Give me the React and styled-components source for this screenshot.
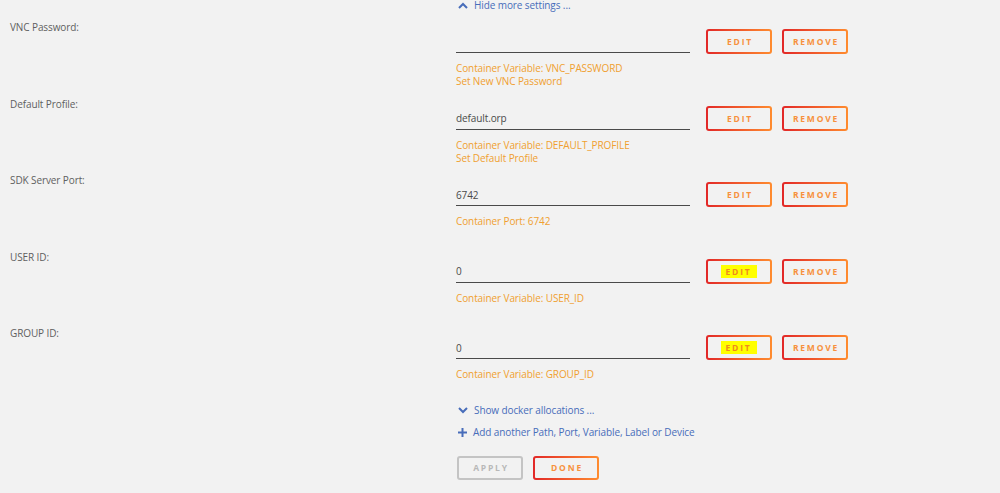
import React from "react";
import styled, { createGlobalStyle } from "styled-components";

const GlobalStyle = createGlobalStyle`
  html, body {
    margin: 0;
    padding: 0;
    background: #f2f2f2;
  }
  body {
    font-family: "Open Sans", "Liberation Sans", sans-serif;
    font-size: 10px;
    letter-spacing: -0.1px;
    color: #606060;
  }
`;

export const Page = styled.div`
  width: 1000px;
  height: 493px;
  overflow: hidden;
  background: #f2f2f2;
`;

// 블루 링크 (Hide more settings, Show docker allocations ...)
export const LinkRow = styled.div`
  display: flex;
  align-items: center;
  gap: 6px;
  margin-left: 458px;
  height: ${(p) => p.$h || 22}px;
  color: #486dba;
  line-height: 13px;
  svg {
    flex: none;
  }
`;

export const TopLink = styled(LinkRow)`
  height: 11px;
  margin-bottom: 8px;
`;

export const Settings = styled.div`
  display: flex;
  flex-direction: column;
`;

export const Row = styled.div`
  display: grid;
  grid-template-columns: 456px 392px;
  height: 76.5px;
`;

export const Label = styled.div`
  padding: 2px 0 0 10px;
  line-height: 13px;
  color: #5f5f5f;
`;

export const Field = styled.div`
  display: flex;
  flex-direction: column;
  padding-top: 10px;
`;

export const InputLine = styled.div`
  display: flex;
  align-items: center;
  gap: 16px;
`;

export const Input = styled.div`
  width: 234px;
  height: 23px;
  border-bottom: 1px solid #4a4a4a;
  box-sizing: border-box;
  display: flex;
  align-items: center;
  color: #4a4a4a;
  padding-top: 1px;
`;

export const Buttons = styled.div`
  display: flex;
  gap: 10px;
`;

// 빨강-주황 그라데이션 테두리 버튼
export const Button = styled.div`
  width: 66px;
  height: ${(p) => p.$h || 25}px;
  box-sizing: border-box;
  border: 2px solid transparent;
  border-radius: 3px;
  background: ${(p) =>
    p.$disabled
      ? "linear-gradient(#f2f2f2, #f2f2f2) padding-box, linear-gradient(#c4c4c4, #c4c4c4) border-box"
      : "linear-gradient(#f2f2f2, #f2f2f2) padding-box, linear-gradient(90deg, #e22828, #ff8c2f) border-box"};
  color: ${(p) => (p.$disabled ? "#b8b8b8" : "#f7913d")};
  display: flex;
  align-items: center;
  justify-content: center;
  font-size: 8.5px;
  font-weight: 700;
  letter-spacing: 1.8px;
  text-transform: uppercase;
  padding-left: 2px;
`;

export const Mark = styled.span`
  background: #ffff00;
  color: #f08a1e;
  padding: 2px 5px 1px 5px;
  margin-left: -3px;
  line-height: 10px;
`;

export const Help = styled.div`
  margin-top: 8px;
  color: #f0a030;
  line-height: 13px;
`;

export const Footer = styled.div`
  display: flex;
  gap: 10px;
  margin: 10px 0 0 457px;
`;

const ChevronUp = () => (
  <svg width="10" height="7" viewBox="0 0 10 7">
    <path d="M1 6 L5 2 L9 6" fill="none" stroke="#486dba" strokeWidth="2" />
  </svg>
);

const ChevronDown = () => (
  <svg width="10" height="7" viewBox="0 0 10 7">
    <path d="M1 1 L5 5 L9 1" fill="none" stroke="#486dba" strokeWidth="2" />
  </svg>
);

const Plus = () => (
  <svg width="9" height="9" viewBox="0 0 9 9">
    <path d="M4.5 0 V9 M0 4.5 H9" fill="none" stroke="#486dba" strokeWidth="2" />
  </svg>
);

const rows = [
  { label: "VNC Password:", value: "", help: ["Container Variable: VNC_PASSWORD", "Set New VNC Password"] },
  { label: "Default Profile:", value: "default.orp", help: ["Container Variable: DEFAULT_PROFILE", "Set Default Profile"] },
  { label: "SDK Server Port:", value: "6742", help: ["Container Port: 6742"] },
  { label: "USER ID:", value: "0", help: ["Container Variable: USER_ID"], mark: true },
  { label: "GROUP ID:", value: "0", help: ["Container Variable: GROUP_ID"], mark: true },
];

export default function App() {
  return (
    <Page>
      <GlobalStyle />
      <TopLink>
        <ChevronUp />
        <span>Hide more settings ...</span>
      </TopLink>
      <Settings>
        {rows.map((r) => (
          <Row key={r.label}>
            <Label>{r.label}</Label>
            <Field>
              <InputLine>
                <Input>{r.value}</Input>
                <Buttons>
                  <Button>{r.mark ? <Mark>Edit</Mark> : "Edit"}</Button>
                  <Button>Remove</Button>
                </Buttons>
              </InputLine>
              <Help>
                {r.help.map((h) => (
                  <div key={h}>{h}</div>
                ))}
              </Help>
            </Field>
          </Row>
        ))}
      </Settings>
      <LinkRow $h={17}>
        <ChevronDown />
        <span>Show docker allocations ...</span>
      </LinkRow>
      <LinkRow $h={27}>
        <Plus />
        <span>Add another Path, Port, Variable, Label or Device</span>
      </LinkRow>
      <Footer>
        <Button $disabled $h={24}>Apply</Button>
        <Button $h={24}>Done</Button>
      </Footer>
    </Page>
  );
}
